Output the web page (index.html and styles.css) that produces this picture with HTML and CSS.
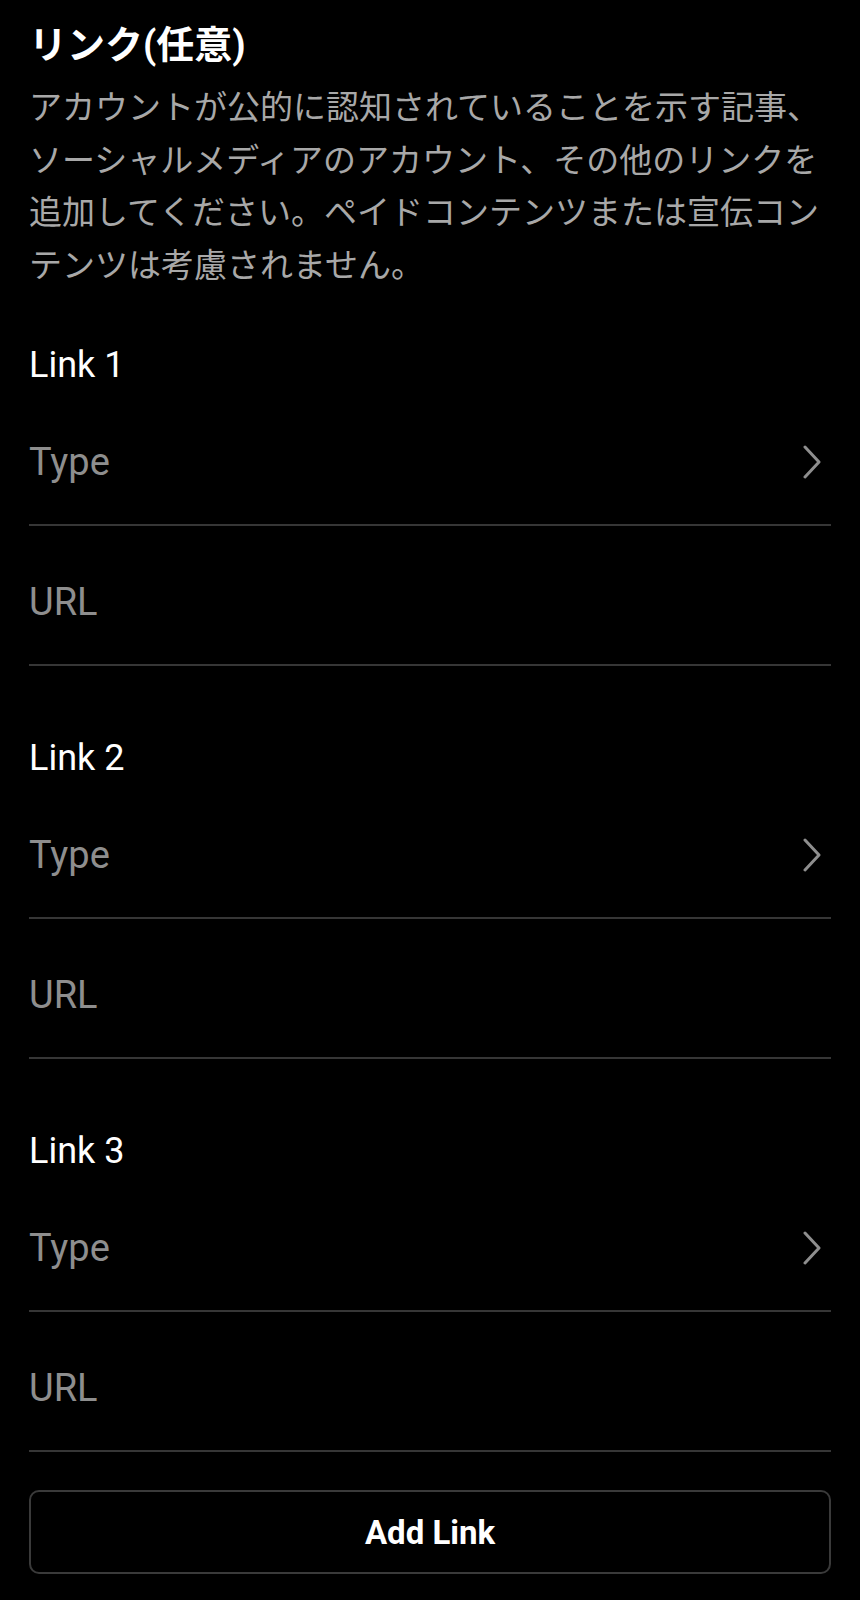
FILE: index.html
```html
<!DOCTYPE html>
<html lang="ja">
<head>
<meta charset="utf-8">
<title>リンク(任意)</title>
<link rel="stylesheet" href="styles.css">
</head>
<body>
<main class="page">
  <h1 class="title">リンク(任意)</h1>
  <p class="desc">アカウントが公的に認知されていることを示す記事、ソーシャルメディアのアカウント、その他のリンクを追加してください。ペイドコンテンツまたは宣伝コンテンツは考慮されません。</p>

  <section class="link-block">
    <div class="link-label">Link 1</div>
    <div class="row"><span class="placeholder">Type</span><svg class="chev" width="20" height="34" viewBox="0 0 20 34"><polyline points="3,2 17,17 3,32" fill="none" stroke="#8e8e8e" stroke-width="3" stroke-linecap="round" stroke-linejoin="round"/></svg></div>
    <div class="row"><span class="placeholder">URL</span></div>
  </section>

  <section class="link-block">
    <div class="link-label">Link 2</div>
    <div class="row"><span class="placeholder">Type</span><svg class="chev" width="20" height="34" viewBox="0 0 20 34"><polyline points="3,2 17,17 3,32" fill="none" stroke="#8e8e8e" stroke-width="3" stroke-linecap="round" stroke-linejoin="round"/></svg></div>
    <div class="row"><span class="placeholder">URL</span></div>
  </section>

  <section class="link-block">
    <div class="link-label">Link 3</div>
    <div class="row"><span class="placeholder">Type</span><svg class="chev" width="20" height="34" viewBox="0 0 20 34"><polyline points="3,2 17,17 3,32" fill="none" stroke="#8e8e8e" stroke-width="3" stroke-linecap="round" stroke-linejoin="round"/></svg></div>
    <div class="row"><span class="placeholder">URL</span></div>
  </section>

  <button class="add-btn" type="button">Add Link</button>
</main>
</body>
</html>
```

FILE: styles.css
```css
html, body {
  margin: 0;
  padding: 0;
  background: #000;
}

body {
  font-family: Roboto, "Noto Sans CJK JP", sans-serif;
  color: #fff;
}

.page {
  padding: 23px 29px 0 29px;
  display: flex;
  flex-direction: column;
}

.title {
  margin: 0;
  font-size: 38px;
  line-height: 45px;
  font-weight: 700;
  color: #fff;
}

.desc {
  margin: 11px 0 0 0;
  font-family: "Noto Sans CJK JP", sans-serif;
  font-size: 33px;
  line-height: 52.5px;
  color: #a8a8a8;
}

.link-block {
  display: flex;
  flex-direction: column;
  margin-top: 71px;
}

.link-block:first-of-type {
  margin-top: 55px;
}

.link-label {
  font-size: 36px;
  line-height: 42px;
  color: #fff;
}

.row {
  display: flex;
  align-items: center;
  justify-content: space-between;
  padding: 55px 0 41px 0;
  border-bottom: 2px solid #363636;
}

.placeholder {
  font-size: 38px;
  line-height: 42px;
  color: #8e8e8e;
}

.chev {
  margin-right: 9px;
  display: block;
}

.add-btn {
  margin-top: 38px;
  height: 84px;
  width: 100%;
  background: #000;
  border: 2px solid #3a3a3a;
  border-radius: 10px;
  color: #fff;
  font-family: Roboto, "Noto Sans CJK JP", sans-serif;
  font-size: 33px;
  font-weight: 700;
}
```
